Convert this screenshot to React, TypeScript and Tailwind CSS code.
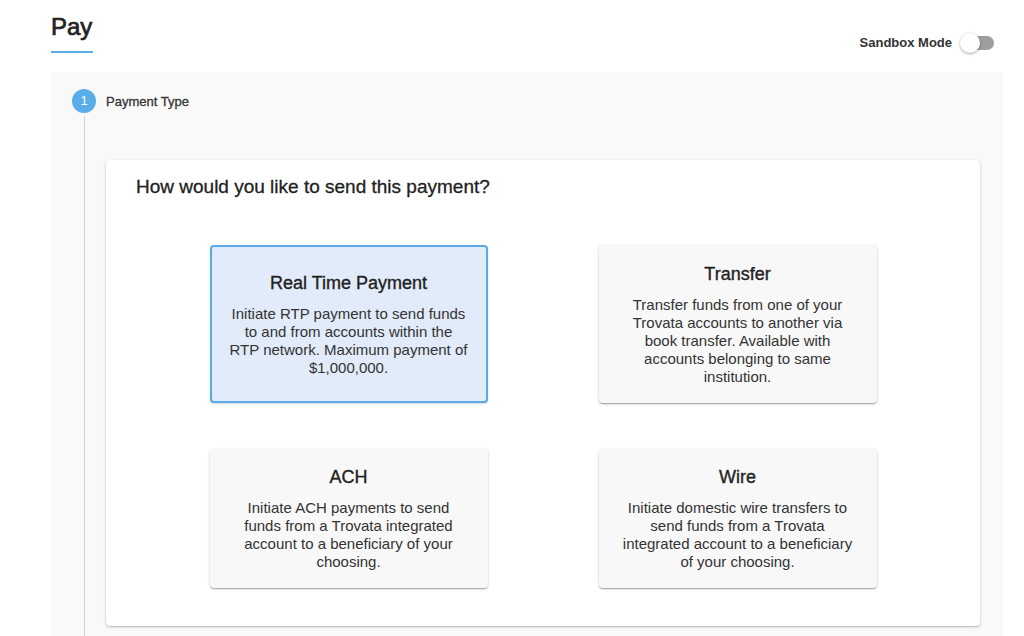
const OPTIONS = [
  {
    title: "Real Time Payment",
    description:
      "Initiate RTP payment to send funds to and from accounts within the RTP network. Maximum payment of $1,000,000.",
    selected: true,
  },
  {
    title: "Transfer",
    description:
      "Transfer funds from one of your Trovata accounts to another via book transfer. Available with accounts belonging to same institution.",
    selected: false,
  },
  {
    title: "ACH",
    description:
      "Initiate ACH payments to send funds from a Trovata integrated account to a beneficiary of your choosing.",
    selected: false,
  },
  {
    title: "Wire",
    description:
      "Initiate domestic wire transfers to send funds from a Trovata integrated account to a beneficiary of your choosing.",
    selected: false,
  },
];

function OptionCard({ title, description, selected, tall }: { title: string; description: string; selected: boolean; tall: boolean }) {
  return (
    <div
      className={
        (tall ? "h-[158px] " : "h-[139px] ") +
        (selected
          ? "border-2 border-[#5aa9e6] bg-[#e2ebf9] shadow-[0_1px_2px_rgba(0,0,0,0.15)] "
          : "bg-[#f8f8f8] shadow-[0_1px_3px_rgba(0,0,0,0.2),0_1px_1px_rgba(0,0,0,0.14),0_2px_1px_-1px_rgba(0,0,0,0.12)] ") +
        "flex w-[278px] cursor-pointer flex-col items-center justify-center rounded-[4px] text-center"
      }
    >
      <h3 className="text-[18px] leading-[22px] text-[#222] [-webkit-text-stroke:0.35px_#222]">{title}</h3>
      <p className="mt-[11px] w-[240px] text-[15px] leading-[18px] text-[#333]">{description}</p>
    </div>
  );
}

export default function App() {
  return (
    <div className="flex h-[636px] w-full flex-col overflow-hidden bg-white font-['Liberation_Sans',Arial,sans-serif]">
      {/* header */}
      <div className="flex h-[72px] shrink-0 items-start justify-between pl-[51px] pr-[30px]">
        <div className="pt-[12px]">
          <h1 className="text-[24px] leading-[30px] text-[#222] [-webkit-text-stroke:0.7px_#222]">Pay</h1>
          <div className="mt-[9px] h-[2px] w-[42px] bg-[#5aaee8]" />
        </div>
        <div className="mt-[33px] flex items-center gap-[8px]">
          <span className="text-[13px] font-bold text-[#333]">Sandbox Mode</span>
          <div className="relative flex h-[20px] w-[34px] items-center">
            <div className="ml-[3px] h-[14px] w-[31px] rounded-full bg-[#9e9e9e]" />
            <div className="absolute left-0 top-0 h-[20px] w-[20px] rounded-full bg-white shadow-[0_1px_3px_rgba(0,0,0,0.35)]" />
          </div>
        </div>
      </div>

      {/* stepper panel */}
      <div className="ml-[51px] mr-[21px] flex flex-1 flex-col bg-[#f9f9f9]">
        <div className="flex items-center pl-[21px] pt-[17px]">
          <div className="flex h-[24px] w-[24px] items-center justify-center rounded-full bg-[#5aaee8] text-[13px] text-white">
            1
          </div>
          <span className="ml-[10px] mt-[1px] text-[13px] text-[#333] [-webkit-text-stroke:0.3px_#333]">Payment Type</span>
        </div>

        <div className="ml-[33px] mt-[3px] flex-1 border-l border-[#cfcfcf] pl-[21px] pr-[23px] pt-[44px]">
          <div className="rounded-[4px] bg-white pb-[38px] pt-[15px] shadow-[0_1px_3px_rgba(0,0,0,0.2),0_1px_1px_rgba(0,0,0,0.1)]">
            <h2 className="pl-[30px] text-[19px] leading-[24px] text-[#222] [-webkit-text-stroke:0.3px_#222]">
              How would you like to send this payment?
            </h2>
            <div className="mt-[46px] grid grid-cols-[278px_278px] justify-center gap-x-[111px] gap-y-[46px]">
              {OPTIONS.map((o, i) => (
                <OptionCard key={o.title} {...o} tall={i < 2} />
              ))}
            </div>
          </div>
        </div>
      </div>
    </div>
  );
}
